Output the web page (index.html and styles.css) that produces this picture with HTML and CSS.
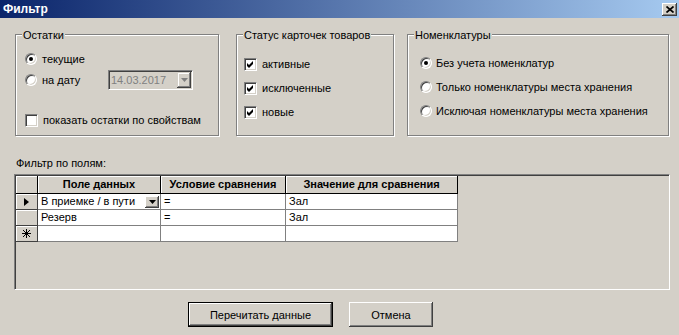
FILE: index.html
```html
<!DOCTYPE html>
<html lang="ru">
<head>
    <meta charset="UTF-8">
    <title>Фильтр</title>
    <link rel="stylesheet" href="styles.css">
</head>
<body>
<div class="titlebar">
    <span class="title">Фильтр</span>
    <span class="close-btn">
        <svg width="8" height="7" viewBox="0 0 8 7"><path d="M0.5 0.5 L7.5 6.5 M7.5 0.5 L0.5 6.5" stroke="#000" stroke-width="1.7"/></svg>
    </span>
</div>

<div class="groups">
    <div class="group group-rest">
        <span class="group-title">Остатки</span>
        <div class="group-body">
            <div class="opt opt-now"><span class="radio checked"></span>текущие</div>
            <div class="opt opt-date">
                <span class="radio"></span><span class="date-label">на дату</span>
                <div class="date-box">
                    <span>14.03.2017</span>
                    <span class="combo-btn"><svg width="7" height="4" viewBox="0 0 7 4"><polygon points="0,0 7,0 3.5,4" fill="#808080"/></svg></span>
                </div>
            </div>
            <div class="opt opt-props"><span class="check"></span>показать остатки по свойствам</div>
        </div>
    </div>

    <div class="group group-status">
        <span class="group-title">Статус карточек товаров</span>
        <div class="group-body">
            <div class="opt"><span class="check checked"><svg width="7" height="7" viewBox="0 0 7 7"><polygon points="0,2 2,4 6,0 6,3 2,7 0,5" fill="#000"/></svg></span>активные</div>
            <div class="opt"><span class="check checked"><svg width="7" height="7" viewBox="0 0 7 7"><polygon points="0,2 2,4 6,0 6,3 2,7 0,5" fill="#000"/></svg></span>исключенные</div>
            <div class="opt"><span class="check checked"><svg width="7" height="7" viewBox="0 0 7 7"><polygon points="0,2 2,4 6,0 6,3 2,7 0,5" fill="#000"/></svg></span>новые</div>
        </div>
    </div>

    <div class="group group-nom">
        <span class="group-title">Номенклатуры</span>
        <div class="group-body">
            <div class="opt"><span class="radio checked"></span>Без учета номенклатур</div>
            <div class="opt"><span class="radio"></span>Только номенклатуры места хранения</div>
            <div class="opt"><span class="radio"></span>Исключая номенклатуры места хранения</div>
        </div>
    </div>
</div>

<div class="fields-label">Фильтр по полям:</div>

<div class="grid-panel">
    <div class="grid">
        <div class="head"></div>
        <div class="head">Поле данных</div>
        <div class="head">Условие сравнения</div>
        <div class="head">Значение для сравнения</div>

        <div class="rh"><svg width="5" height="8" viewBox="0 0 5 8"><polygon points="0,0 5,4 0,8" fill="#000"/></svg></div>
        <div class="cell cell-combo">В приемке / в пути<span class="grid-combo"><svg width="7" height="4" viewBox="0 0 7 4"><polygon points="0,0 7,0 3.5,4" fill="#000"/></svg></span></div>
        <div class="cell">=</div>
        <div class="cell">Зал</div>

        <div class="rh"></div>
        <div class="cell">Резерв</div>
        <div class="cell">=</div>
        <div class="cell">Зал</div>

        <div class="rh"><svg width="9" height="9" viewBox="0 0 9 9"><path d="M4.5 0 V9 M0 4.5 H9 M1 1 L8 8 M8 1 L1 8" stroke="#000" stroke-width="1"/></svg></div>
        <div class="cell"></div>
        <div class="cell"></div>
        <div class="cell"></div>
    </div>
</div>

<div class="buttons">
    <button class="btn btn-default">Перечитать данные</button>
    <button class="btn btn-cancel">Отмена</button>
</div>
</body>
</html>
```

FILE: styles.css
```css
* {
    box-sizing: border-box;
}

body {
    margin: 0;
    width: 679px;
    height: 335px;
    overflow: hidden;
    background: #d4d0c8;
    font-family: "Liberation Sans", Arial, sans-serif;
    font-size: 11px;
    color: #000;
}

.titlebar {
    height: 18px;
    display: flex;
    justify-content: space-between;
    align-items: center;
    padding: 0 2px 0 3px;
    background: linear-gradient(to right, #0a246a, #a6caf0);
}
.title {
    color: #fff;
    font-weight: bold;
    font-size: 12px;
}
.close-btn {
    width: 15px;
    height: 13px;
    display: flex;
    align-items: center;
    justify-content: center;
    background: #d4d0c8;
    box-shadow: inset -1px -1px #404040, inset 1px 1px #fff, inset -2px -2px #808080;
}

/* group boxes */
.groups {
    display: flex;
    height: 118px;
    padding: 16px 0 0 15px;
}
.group {
    height: 102px;
    border: 1px solid #808080;
    box-shadow: inset 1px 1px #fff, 1px 1px #fff;
    display: flex;
    flex-direction: column;
    align-items: flex-start;
}
.group-title {
    margin: -6px 0 0 6px;
    padding: 0 1px;
    line-height: 13px;
    background: #d4d0c8;
}
.group-body {
    display: flex;
    flex-direction: column;
    gap: 8px;
}
.group-rest {
    width: 204px;
}
.group-rest .group-body {
    padding: 9px 0 0 9px;
    gap: 0;
}
.group-status {
    width: 158px;
    margin-left: 17px;
}
.group-status .group-body {
    padding: 14px 0 0 7px;
}
.group-nom {
    width: 262px;
    margin-left: 13px;
}
.group-nom .group-body {
    padding: 13px 0 0 12px;
}

.opt {
    display: flex;
    align-items: center;
    height: 16px;
    line-height: 16px;
    white-space: nowrap;
}
.opt-date {
    height: 20px;
    margin-top: 3px;
}
.opt-props {
    margin-top: 22px;
}
.group-nom .radio {
    margin-right: 4px;
}

.radio {
    position: relative;
    width: 12px;
    height: 12px;
    margin-right: 5px;
    border-radius: 50%;
    border: 1px solid;
    border-color: #808080 #fff #fff #808080;
    box-shadow: inset 1px 1px #404040, inset -1px -1px #d4d0c8;
    background: #fff;
    flex-shrink: 0;
}
.radio.checked::after {
    content: "";
    position: absolute;
    left: 3px;
    top: 3px;
    width: 4px;
    height: 4px;
    border-radius: 50%;
    background: #000;
}

.check {
    width: 13px;
    height: 13px;
    margin-right: 5px;
    display: flex;
    align-items: center;
    justify-content: center;
    border: 1px solid;
    border-color: #808080 #fff #fff #808080;
    box-shadow: inset 1px 1px #404040, inset -1px -1px #d4d0c8;
    background: #fff;
    flex-shrink: 0;
}

.date-label {
    width: 66px;
}
.date-box {
    width: 85px;
    height: 20px;
    display: flex;
    align-items: center;
    justify-content: space-between;
    padding: 0 1px 0 2px;
    border: 1px solid;
    border-color: #808080 #fff #fff #808080;
    box-shadow: inset 1px 1px #404040, inset -1px -1px #d4d0c8;
    color: #808080;
    line-height: 14px;
}
.combo-btn {
    width: 14px;
    height: 16px;
    display: flex;
    align-items: center;
    justify-content: center;
    background: #d4d0c8;
    box-shadow: inset -1px -1px #404040, inset 1px 1px #d4d0c8, inset -2px -2px #808080, inset 2px 2px #fff;
}

/* grid */
.fields-label {
    margin: 21px 0 0 16px;
    line-height: 13px;
}
.grid-panel {
    width: 656px;
    height: 116px;
    margin: 4px 0 0 14px;
    padding: 1px 0 0 1px;
    border: 1px solid;
    border-color: #808080 #fff #fff #808080;
    box-shadow: inset 1px 1px #404040;
}
.grid {
    display: grid;
    grid-template-columns: 22px 123px 125px 172px;
    grid-template-rows: 18px 16px 16px 16px;
}
.head {
    background: #d4d0c8;
    font-weight: bold;
    text-align: center;
    line-height: 17px;
    border-right: 1px solid #000;
    border-bottom: 1px solid #000;
    box-shadow: inset 1px 1px #fff;
    white-space: nowrap;
}
.rh {
    display: flex;
    align-items: center;
    justify-content: center;
    background: #d4d0c8;
    border-right: 1px solid #404040;
    border-bottom: 1px solid #404040;
    box-shadow: inset 1px 1px #fff;
}
.cell {
    background: #fff;
    padding: 0 2px 0 3px;
    line-height: 15px;
    border-right: 1px solid #808080;
    border-bottom: 1px solid #808080;
    white-space: nowrap;
    overflow: hidden;
}
.cell-combo {
    display: flex;
    align-items: center;
    justify-content: space-between;
    padding-right: 1px;
}
.grid-combo {
    width: 14px;
    height: 12px;
    display: flex;
    align-items: center;
    justify-content: center;
    background: #d4d0c8;
    box-shadow: inset -1px -1px #404040, inset 1px 1px #fff, inset -2px -2px #808080;
}

/* buttons */
.buttons {
    display: flex;
    gap: 16px;
    margin: 12px 0 0 188px;
}
.btn {
    height: 25px;
    padding: 0;
    font: inherit;
    color: #000;
    background: #d4d0c8;
    border: none;
    box-shadow: inset -1px -1px #404040, inset 1px 1px #fff, inset -2px -2px #808080;
}
.btn-default {
    width: 145px;
    border: 1px solid #000;
}
.btn-cancel {
    width: 84px;
}
```
